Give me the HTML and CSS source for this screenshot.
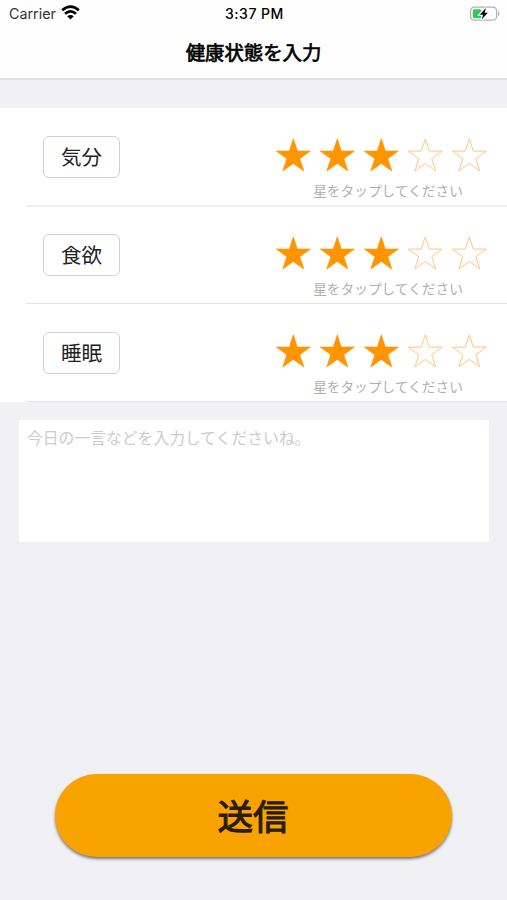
FILE: index.html
```html
<!DOCTYPE html>
<html lang="ja">
<head>
<meta charset="utf-8">
<title>健康状態を入力</title>
<link rel="stylesheet" href="styles.css">
</head>
<body>
<svg width="0" height="0" class="defs" aria-hidden="true">
  <symbol id="star" viewBox="0 0 44 36">
    <path d="M22.3 .8 26.3 13.1H39.3L28.8 20.7 32.8 33 22.3 25.4 11.8 33 15.8 20.7 5.3 13.1H18.3Z"/>
  </symbol>
</svg>
<header class="header">
  <div class="status">
    <div class="carrier">
      <span>Carrier</span>
      <svg class="wifi" width="19" height="15" viewBox="0 0 19 15">
        <path d="M1.2 5.3Q9.5-1.9 17.8 5.3M4 8.7Q9.5 3.9 15 8.7" fill="none" stroke="#000" stroke-width="2.7"/>
        <path d="M6.2 11.3Q9.5 8.5 12.8 11.3L9.5 14.6Z"/>
      </svg>
    </div>
    <time class="time">3:37 PM</time>
    <svg class="battery" width="32" height="16" viewBox="0 0 32 16">
      <rect x="1.6" y="1.2" width="26" height="13" rx="3.8" fill="#fff" stroke="#b2b2b2" stroke-width="1.3"/>
      <path d="M29 5Q32 7.7 29 10.4Z" fill="#b2b2b2"/>
      <rect x="3.8" y="3.2" width="8.6" height="9" rx="1.5" fill="#34c75a"/>
      <path d="M16.9 2 10.8 8.7H14.1L12.7 13.6 18.8 6.8H15.6Z" stroke="#fff" stroke-width="2.4" paint-order="stroke"/>
    </svg>
  </div>
  <h1 class="title">健康状態を入力</h1>
</header>
<main>
  <section class="list">
    <div class="row">
      <span class="label">気分</span>
      <div class="rating">
        <div class="stars">
          <svg class="star on"><use href="#star"/></svg><svg class="star on"><use href="#star"/></svg><svg class="star on"><use href="#star"/></svg><svg class="star"><use href="#star"/></svg><svg class="star"><use href="#star"/></svg>
        </div>
        <p class="hint">星をタップしてください</p>
      </div>
    </div>
    <div class="row">
      <span class="label">食欲</span>
      <div class="rating">
        <div class="stars">
          <svg class="star on"><use href="#star"/></svg><svg class="star on"><use href="#star"/></svg><svg class="star on"><use href="#star"/></svg><svg class="star"><use href="#star"/></svg><svg class="star"><use href="#star"/></svg>
        </div>
        <p class="hint">星をタップしてください</p>
      </div>
    </div>
    <div class="row">
      <span class="label">睡眠</span>
      <div class="rating">
        <div class="stars">
          <svg class="star on"><use href="#star"/></svg><svg class="star on"><use href="#star"/></svg><svg class="star on"><use href="#star"/></svg><svg class="star"><use href="#star"/></svg><svg class="star"><use href="#star"/></svg>
        </div>
        <p class="hint">星をタップしてください</p>
      </div>
    </div>
  </section>
  <textarea class="comment" placeholder="今日の一言などを入力してくださいね。"></textarea>
  <button class="submit" type="button">送信</button>
</main>
</body>
</html>
```
FILE: styles.css
```css
* { box-sizing: border-box; }

body {
  margin: 0;
  height: 900px;
  overflow: hidden;
  background: #f0f0f5;
  font-family: "Noto Sans CJK JP", sans-serif;
  color: #000;
}

.defs { display: block; }

.header {
  height: 80px;
  background: #fefefe;
  border-bottom: 2px solid #e0e0e2;
}

.status {
  display: grid;
  grid-template-columns: 1fr auto 1fr;
  align-items: center;
  height: 27px;
  padding: 0 6px 0 9px;
  font-family: Inter, sans-serif;
  font-size: 14px;
}

.carrier {
  display: flex;
  align-items: center;
  gap: 5px;
  font-size: 14.3px;
  color: #333;
}

.wifi { margin-top: -2px; }

.time {
  margin-right: 1px;
  font-weight: 500;
  font-size: 14px;
  letter-spacing: .5px;
}

.battery { justify-self: end; }

.title {
  margin: 0;
  font-size: 19.4px;
  line-height: 50px;
  font-weight: 400;
  -webkit-text-stroke: .7px #000;
  text-align: center;
}

.list {
  margin-top: 28px;
  padding-left: 26px;
  background: #fff;
}

.row {
  display: flex;
  justify-content: space-between;
  align-items: flex-start;
  height: 98px;
  padding: 28px 16px 0 17px;
  border-bottom: 1px solid #e6e6e9;
}

.row:first-child {
  height: 99px;
  border-bottom: 2px solid #f1f1f2;
}

.row:nth-child(2) {
  height: 97px;
  padding-top: 27px;
}

.label {
  width: 77px;
  height: 42px;
  border: 1.5px solid #d0d0d0;
  border-radius: 6px;
  font-size: 20.5px;
  line-height: 39px;
  text-align: center;
  color: #222;
}

.rating { width: 220px; padding-top: 2px; }

.stars { display: flex; height: 36px; }

.star {
  width: 44px;
  height: 36px;
  fill: none;
  stroke: #ffc780;
  stroke-width: 1;
}

.star.on {
  fill: #ff9500;
  stroke: #ff9500;
  stroke-width: .7;
}

.hint {
  margin: 6px 0 0;
  padding-left: 14px;
  font-size: 13.7px;
  line-height: 20px;
  text-align: center;
  color: #b0b0b0;
}

.comment {
  display: block;
  width: 470px;
  height: 122px;
  margin: 18px 0 0 19px;
  padding: 6px 8px;
  border: 0;
  border-radius: 2px;
  resize: none;
  background: #fff;
  font-family: inherit;
  font-size: 15.8px;
  line-height: 23px;
}

.comment::placeholder { color: #ccc; }

.submit {
  display: block;
  width: 397px;
  height: 83px;
  margin: 232px 0 0 55px;
  padding: 0 1px 2px 0;
  border: 0;
  border-radius: 42px;
  background: #f8a300;
  box-shadow: 0 2px 3px rgba(0, 0, 0, .5);
  font-family: inherit;
  font-size: 35.5px;
  font-weight: 400;
  -webkit-text-stroke: 1.1px #2a1c04;
  line-height: 80px;
  color: #2a1c04;
}
```
